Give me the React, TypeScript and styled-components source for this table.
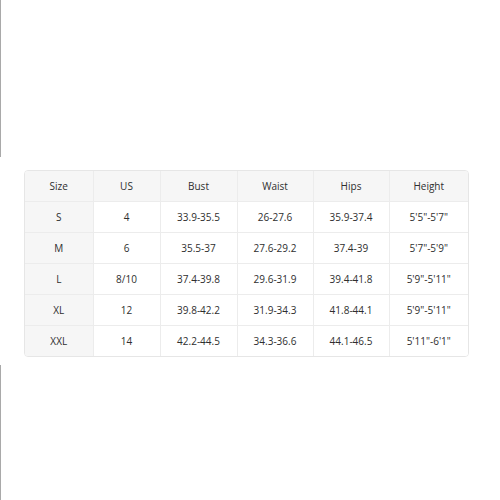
import React from "react";
import styled, { createGlobalStyle } from "styled-components";

const Global = createGlobalStyle`
  html, body { margin: 0; padding: 0; background: #fff; }
  body { font-family: "Open Sans", "Noto Sans", sans-serif; }
`;

const Page = styled.div`
  width: 500px;
  height: 500px;
  display: flex;
  flex-direction: column;
`;

const EdgeLine = styled.div<{ $h: number }>`
  height: ${(p) => p.$h}px;
  border-left: 1px solid #a9a9a9;
  flex: none;
`;

const Middle = styled.div`
  flex: 1;
  display: flex;
  align-items: flex-start;
  padding: 13px 0 0 24px;
`;

const Frame = styled.div`
  border: 1px solid #e6e6e6;
  border-radius: 4px;
  overflow: hidden;
`;

const Table = styled.table`
  border-collapse: collapse;
  table-layout: fixed;
  font-size: 10px;
  color: #2e2e2e;
`;

const Cell = styled.td<{ $head?: boolean; $first?: boolean }>`
  height: 30px;
  padding: 0;
  text-align: center;
  border-right: 1px solid #ececec;
  border-bottom: 1px solid #ececec;
  background: ${(p) => (p.$head || p.$first ? "#f6f6f6" : "#fff")};
  font-weight: 400;
  &:last-child { border-right: none; }
  tr:last-child > & { border-bottom: none; }
`;

const widths = [68, 67, 77, 76, 76, 79];
const head = ["Size", "US", "Bust", "Waist", "Hips", "Height"];
const rows = [
  ["S", "4", "33.9-35.5", "26-27.6", "35.9-37.4", `5'5"-5'7"`],
  ["M", "6", "35.5-37", "27.6-29.2", "37.4-39", `5'7"-5'9"`],
  ["L", "8/10", "37.4-39.8", "29.6-31.9", "39.4-41.8", `5'9"-5'11"`],
  ["XL", "12", "39.8-42.2", "31.9-34.3", "41.8-44.1", `5'9"-5'11"`],
  ["XXL", "14", "42.2-44.5", "34.3-36.6", "44.1-46.5", `5'11"-6'1"`],
];

export default function App() {
  return (
    <>
      <Global />
      <Page>
        <EdgeLine $h={157} />
        <Middle>
          <Frame>
            <Table>
              <colgroup>
                {widths.map((w, i) => (
                  <col key={i} style={{ width: w }} />
                ))}
              </colgroup>
              <tbody>
                <tr>
                  {head.map((h) => (
                    <Cell key={h} as="th" $head>
                      {h}
                    </Cell>
                  ))}
                </tr>
                {rows.map((r) => (
                  <tr key={r[0]}>
                    {r.map((c, i) => (
                      <Cell key={i} $first={i === 0}>
                        {c}
                      </Cell>
                    ))}
                  </tr>
                ))}
              </tbody>
            </Table>
          </Frame>
        </Middle>
        <EdgeLine $h={135} />
      </Page>
    </>
  );
}
